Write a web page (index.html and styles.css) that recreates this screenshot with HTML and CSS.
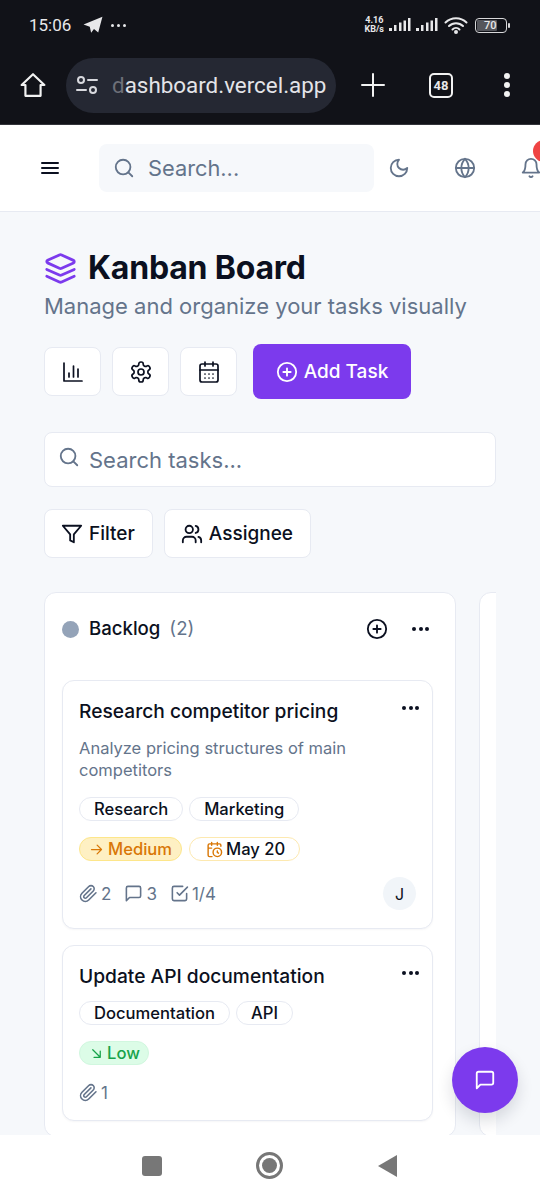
FILE: index.html
```html
<!DOCTYPE html>
<html>
<head>
  <meta name="viewport" content="width=device-width, initial-scale=1">
  <title>Kanban Board</title>
  <link rel="stylesheet" href="styles.css">
</head>
<body>
<div class="phone">

  <!-- android status bar + browser toolbar -->
  <div class="chrome">
    <div class="status">
      <span class="clock">15:06</span>
      <svg class="plane" viewBox="0 0 18 16"><path d="M17.500 .5 .5 7.600l5.600 2 1.200 5.400 2.600-3.400 3.800 3.200z" fill="#e8e8ea"/></svg>
      <span class="status-dots"><i></i><i></i><i></i></span>
      <span class="status-space"></span>
      <span class="speed">4.16<br>KB/s</span>
      <svg class="bars" viewBox="0 0 22 14"><g fill="#e8e8ea"><rect x="0" y="10" width="3" height="3"/><rect x="5" y="7" width="2.500" height="6"/><rect x="10" y="4.500" width="2.500" height="8.500"/><rect x="14.500" y="2.500" width="2.500" height="10.500"/><rect x="19" y="0" width="2.500" height="13"/></g></svg>
      <svg class="bars" viewBox="0 0 22 14"><g fill="#e8e8ea"><rect x="0" y="10" width="3" height="3"/><rect x="5" y="7" width="2.500" height="6"/><rect x="10" y="4.500" width="2.500" height="8.500"/><rect x="14.500" y="2.500" width="2.500" height="10.500"/><rect x="19" y="0" width="2.500" height="13"/></g></svg>
      <svg class="wifi" viewBox="0 0 24 18" fill="none" stroke="#e8e8ea" stroke-width="2" stroke-linecap="round"><path d="M1.500 6.500a15 15 0 0 1 21 0M5 10a10 10 0 0 1 14 0M8.500 13.500a5 5 0 0 1 7 0"/><circle cx="12" cy="16" r="1" fill="#e8e8ea"/></svg>
      <span class="battery"><span class="battery-level">70</span></span>
      <span class="battery-tip"></span>
    </div>
    <div class="toolbar">
      <svg class="home" viewBox="0 0 24 24" fill="none" stroke="#f2f2f2" stroke-width="2" stroke-linejoin="round"><path d="M12 2 1.500 12H5v10h14V12h3.500z"/></svg>
      <div class="url">
        <svg class="tune" viewBox="0 0 22 20" fill="none" stroke="#d8d9de" stroke-width="2"><circle cx="5" cy="5" r="3"/><path d="M12 5h9M1 15h9"/><circle cx="17" cy="15" r="3"/></svg>
        <span class="url-text"><span class="url-fade">d</span>ashboard.vercel.app</span>
      </div>
      <svg class="plus" viewBox="0 0 24 24" fill="none" stroke="#f2f2f2" stroke-width="2.200"><path d="M12 1v22M1 12h22"/></svg>
      <span class="tabs">48</span>
      <span class="kebab"><i></i><i></i><i></i></span>
    </div>
  </div>

  <!-- app header -->
  <header class="topbar">
    <svg class="menu" viewBox="0 0 18 14" fill="none" stroke="#111827" stroke-width="2"><path d="M1 2h16M1 7h16M1 12h16"/></svg>
    <div class="top-search">
      <svg class="ico20" viewBox="0 0 24 24"><circle cx="11" cy="11" r="8"/><path d="m21 21-4.300-4.300"/></svg>
      <span>Search...</span>
    </div>
    <svg class="ico-top" viewBox="0 0 24 24"><path d="M12 3a6 6 0 0 0 9 9 9 9 0 1 1-9-9Z"/></svg>
    <svg class="ico-top" viewBox="0 0 24 24"><circle cx="12" cy="12" r="10"/><path d="M12 2a14.500 14.500 0 0 0 0 20 14.500 14.500 0 0 0 0-20M2 12h20"/></svg>
    <div class="bell">
      <svg class="ico-top" viewBox="0 0 24 24"><path d="M6 8a6 6 0 0 1 12 0c0 7 3 9 3 9H3s3-2 3-9"/><path d="M10.300 21a1.940 1.940 0 0 0 3.400 0"/></svg>
      <span class="bell-dot"></span>
    </div>
  </header>

  <main class="page">
    <div class="title-row">
      <svg class="layers" viewBox="0 0 24 24"><path d="m12.830 2.180a2 2 0 0 0-1.660 0L2.600 6.080a1 1 0 0 0 0 1.830l8.580 3.910a2 2 0 0 0 1.660 0l8.580-3.900a1 1 0 0 0 0-1.830Z"/><path d="m22 17.650-9.170 4.160a2 2 0 0 1-1.660 0L2 17.650"/><path d="m22 12.650-9.170 4.160a2 2 0 0 1-1.660 0L2 12.650"/></svg>
      <h1>Kanban Board</h1>
    </div>
    <p class="subtitle">Manage and organize your tasks visually</p>

    <div class="actions">
      <button class="icon-btn"><svg viewBox="0 0 24 24"><path d="M3 3v18h18"/><path d="M8 17v-4M12.500 17V6M17 17V9"/></svg></button>
      <button class="icon-btn"><svg viewBox="0 0 24 24"><path d="M12.220 2h-.44a2 2 0 0 0-2 2v.18a2 2 0 0 1-1 1.730l-.43.250a2 2 0 0 1-2 0l-.15-.08a2 2 0 0 0-2.730.730l-.22.380a2 2 0 0 0 .730 2.730l.15.100a2 2 0 0 1 1 1.720v.510a2 2 0 0 1-1 1.740l-.15.090a2 2 0 0 0-.730 2.730l.22.380a2 2 0 0 0 2.730.730l.15-.08a2 2 0 0 1 2 0l.43.250a2 2 0 0 1 1 1.730V20a2 2 0 0 0 2 2h.44a2 2 0 0 0 2-2v-.18a2 2 0 0 1 1-1.730l.43-.250a2 2 0 0 1 2 0l.15.080a2 2 0 0 0 2.730-.730l.22-.390a2 2 0 0 0-.730-2.730l-.15-.080a2 2 0 0 1-1-1.740v-.500a2 2 0 0 1 1-1.740l.15-.090a2 2 0 0 0 .730-2.730l-.22-.380a2 2 0 0 0-2.730-.730l-.15.080a2 2 0 0 1-2 0l-.43-.250a2 2 0 0 1-1-1.730V4a2 2 0 0 0-2-2z"/><circle cx="12" cy="12" r="3"/></svg></button>
      <button class="icon-btn"><svg viewBox="0 0 24 24"><rect x="3" y="4" width="18" height="18" rx="2"/><path d="M8 2v4M16 2v4M3 10h18M8 14h.01M12 14h.01M16 14h.01M8 18h.01M12 18h.01M16 18h.01"/></svg></button>
      <button class="add-btn"><svg class="ico22" viewBox="0 0 24 24"><circle cx="12" cy="12" r="10"/><path d="M8 12h8M12 8v8"/></svg>Add Task</button>
    </div>

    <div class="task-search">
      <svg class="ico20" viewBox="0 0 24 24"><circle cx="11" cy="11" r="8"/><path d="m21 21-4.300-4.300"/></svg>
      <span>Search tasks...</span>
    </div>

    <div class="filters">
      <button class="filter-btn"><svg class="ico20 dark" viewBox="0 0 24 24"><path d="M22 3H2l8 9.460V19l4 2v-8.540z"/></svg>Filter</button>
      <button class="filter-btn"><svg class="ico20 dark" viewBox="0 0 24 24"><path d="M16 21v-2a4 4 0 0 0-4-4H6a4 4 0 0 0-4 4v2"/><circle cx="9" cy="7" r="4"/><path d="M22 21v-2a4 4 0 0 0-3-3.870M16 3.130a4 4 0 0 1 0 7.750"/></svg>Assignee</button>
    </div>

    <div class="board">
      <section class="column">
        <div class="col-head">
          <span class="col-dot"></span>
          <span class="col-name">Backlog</span>
          <span class="col-count">(2)</span>
          <svg class="ico22 dark col-add" viewBox="0 0 24 24"><circle cx="12" cy="12" r="10"/><path d="M8 12h8M12 8v8"/></svg>
          <span class="more col-more"><i></i><i></i><i></i></span>
        </div>

        <article class="card">
          <div class="card-head">
            <h3>Research competitor pricing</h3>
            <span class="more"><i></i><i></i><i></i></span>
          </div>
          <p class="desc">Analyze pricing structures of main competitors</p>
          <div class="tags">
            <span class="tag">Research</span>
            <span class="tag">Marketing</span>
          </div>
          <div class="tags">
            <span class="pill medium"><svg class="ico14" viewBox="0 0 24 24"><path d="M4 12h16M13 5l7 7-7 7"/></svg>Medium</span>
            <span class="pill due"><svg class="ico16" viewBox="0 0 24 24"><path d="M21 7.500V6a2 2 0 0 0-2-2H5a2 2 0 0 0-2 2v14a2 2 0 0 0 2 2h3.500M16 2v4M8 2v4M3 10h5"/><circle cx="16" cy="16" r="6"/><path d="M16 14v2.200l1.600 1"/></svg>May 20</span>
          </div>
          <div class="meta">
            <span class="meta-item"><svg class="ico18" viewBox="0 0 24 24"><path d="m21.440 11.050-9.190 9.190a6 6 0 0 1-8.490-8.490l8.570-8.570A4 4 0 1 1 18 8.840l-8.590 8.570a2 2 0 0 1-2.830-2.830l8.490-8.480"/></svg>2</span>
            <span class="meta-item"><svg class="ico18" viewBox="0 0 24 24"><path d="M21 15a2 2 0 0 1-2 2H7l-4 4V5a2 2 0 0 1 2-2h14a2 2 0 0 1 2 2z"/></svg>3</span>
            <span class="meta-item"><svg class="ico18" viewBox="0 0 24 24"><path d="m9 11 3 3L22 4"/><path d="M21 12v7a2 2 0 0 1-2 2H5a2 2 0 0 1-2-2V5a2 2 0 0 1 2-2h11"/></svg>1/4</span>
            <span class="avatar">J</span>
          </div>
        </article>

        <article class="card">
          <div class="card-head">
            <h3>Update API documentation</h3>
            <span class="more"><i></i><i></i><i></i></span>
          </div>
          <div class="tags">
            <span class="tag">Documentation</span>
            <span class="tag">API</span>
          </div>
          <div class="tags">
            <span class="pill low"><svg class="ico14" viewBox="0 0 24 24"><path d="M6 6l12 12M18 8v10H8"/></svg>Low</span>
          </div>
          <div class="meta meta-last">
            <span class="meta-item"><svg class="ico18" viewBox="0 0 24 24"><path d="m21.440 11.050-9.190 9.190a6 6 0 0 1-8.490-8.490l8.570-8.570A4 4 0 1 1 18 8.840l-8.590 8.570a2 2 0 0 1-2.830-2.830l8.490-8.480"/></svg>1</span>
          </div>
        </article>
      </section>
      <section class="column"></section>
    </div>

    <button class="fab"><svg class="ico22" viewBox="0 0 24 24"><path d="M21 15a2 2 0 0 1-2 2H7l-4 4V5a2 2 0 0 1 2-2h14a2 2 0 0 1 2 2z"/></svg></button>
  </main>

  <!-- android nav keys -->
  <nav class="keys">
    <span class="key-square"></span>
    <span class="key-ring"><span></span></span>
    <span class="key-back"></span>
  </nav>
</div>
</body>
</html>
```

FILE: styles.css
```css
* {box-sizing: border-box;}
html, body {margin: 0; padding: 0;}
body {font-family: Inter, "Noto Sans", sans-serif; color: #0b1020; background: #fff;}
button {font: inherit; color: inherit; cursor: pointer;}
h1, h3, p {margin: 0;}
svg {flex: none; display: block; fill: none; stroke: currentColor; stroke-width: 2; stroke-linecap: round; stroke-linejoin: round;}

.phone {width: 540px; height: 1200px; display: flex; flex-direction: column; overflow: hidden;}

/* status bar and browser bar */
.chrome {background: #111218; color: #e8e8ea; height: 125px; flex: none; border-bottom: 1px solid #33343a; font-family: Roboto, sans-serif;}
.status {height: 42px; padding: 8px 30px 0 29px; display: flex; align-items: center;}
.clock {font-size: 17px; width: 54px;}
.plane {width: 20px; height: 18px; stroke: none;}
.status-dots {display: flex; gap: 3px; margin-left: 8px;}
.status-dots i {width: 3px; height: 3px; border-radius: 50%; background: #e8e8ea;}
.status-space {flex: 1;}
.speed {font-size: 9px; line-height: 9px; font-weight: 700; text-align: center; margin-right: 5px;}
.bars {width: 22px; height: 14px; stroke: none; margin-right: 5px;}
.wifi {width: 24px; height: 18px; margin-left: 1px;}
.battery {width: 32px; height: 15px; margin-left: 7px; border: 1.500px solid #d8d8da; border-radius: 4px; padding: 1px; display: flex;}
.battery-level {background: #55565c; width: 70%; border-radius: 1px; font-size: 11px; line-height: 11px; font-weight: 500; text-align: right; white-space: nowrap; color: #e8e8ea;}
.battery-tip {width: 2px; height: 5px; margin-left: 1px; background: #d8d8da; border-radius: 1px;}
.toolbar {height: 82px; padding: 4px 0 0 20px; display: flex; align-items: center;}
.home {width: 26px; height: 26px; stroke: #f2f2f2;}
.url {width: 270px; height: 55px; margin-left: 20px; border-radius: 28px; background: #252833; display: flex; align-items: center; padding-left: 10px; overflow: hidden;}
.tune {width: 22px; height: 20px; stroke: #d8d9de;}
.url-text {font-size: 22.400px; margin-left: 14px; color: #e3e4e8; white-space: nowrap;}
.url-fade {color: #6d6f78;}
.plus {width: 24px; height: 24px; margin-left: 25px; stroke: #f2f2f2;}
.tabs {width: 24px; height: 25px; margin-left: 44px; border: 2px solid #f2f2f2; border-radius: 5px; font-size: 13px; font-weight: 700; line-height: 21px; text-align: center;}
.kebab {display: flex; flex-direction: column; gap: 3px; margin-left: 51px;}
.kebab i {width: 6px; height: 6px; border-radius: 50%; background: #f2f2f2;}

/* app header */
.topbar {height: 87px; flex: none; background: #fff; border-bottom: 1px solid #e7eaf2; display: flex; align-items: center; padding-left: 41px;}
.menu {width: 18px; height: 14px;}
.top-search {flex: none; width: 275px; height: 48px; margin-left: 40px; margin-right: 14px; background: #f6f8fb; border-radius: 8px; display: flex; align-items: center; gap: 13px; padding-left: 14px; color: #64748b; font-size: 21.800px;}
.ico-top {width: 22px; height: 22px; margin-right: 44px; color: #64748b;}
.bell {position: relative; flex: none; width: 22px; height: 22px;}
.bell .ico-top {margin-right: 0;}
.bell-dot {position: absolute; left: 13px; top: -17px; width: 22px; height: 22px; border-radius: 50%; background: #ef4444;}

/* page */
.page {flex: 1; min-height: 0; position: relative; background: #f6f8fb; padding: 36px 0 0 44px; overflow: hidden;}
.title-row {display: flex; align-items: center; gap: 11px; height: 40px;}
.layers {width: 33px; height: 33px; color: #7c3aed;}
h1 {font-size: 32px; line-height: 40px; font-weight: 700; letter-spacing: -0.2px; white-space: nowrap;}
.subtitle {font-size: 22px; line-height: 30px; color: #64748b; margin-top: 3px; white-space: nowrap;}
.actions {display: flex; align-items: center; gap: 11px; margin-top: 23px;}
.icon-btn {width: 57px; height: 49px; background: #fff; border: 1px solid #e7eaf2; border-radius: 8px; display: flex; align-items: center; justify-content: center; padding: 0; color: #0b1020;}
.icon-btn svg {width: 24px; height: 24px; stroke-width: 1.700;}
.add-btn {margin-left: 5px; width: 158px; height: 55px; background: #7c3aed; color: #fff; border: 0; border-radius: 8px; font-size: 19px; font-weight: 500; display: flex; align-items: center; justify-content: center; gap: 6px; padding: 0;}
.task-search {width: 452px; height: 55px; margin-top: 33px; background: #fff; border: 1px solid #e7eaf2; border-radius: 8px; display: flex; align-items: center; gap: 9px; padding: 0 13px; color: #64748b; font-size: 22px;}
.task-search svg {margin-top: -6px;}
.filters {display: flex; gap: 11px; margin-top: 22px;}
.filter-btn {height: 49px; padding: 0 17px 0 16px; background: #fff; border: 1px solid #e7eaf2; border-radius: 8px; font-size: 19px; font-weight: 500; display: flex; align-items: center; gap: 6px;}
.ico14 {width: 15px; height: 15px;}
.ico16 {width: 17px; height: 17px;}
.ico18 {width: 19px; height: 19px;}
.ico20 {width: 22px; height: 22px;}
.ico22 {width: 22px; height: 22px;}
.dark {color: #0b1020;}

/* board */
.board {width: 452px; margin-top: 34px; display: flex; gap: 23px; overflow: hidden;}
.column {width: 412px; flex: none; background: #fff; border: 1px solid #e7eaf2; border-radius: 12px; padding: 0 22px 15px 17px;}
.col-head {height: 72px; display: flex; align-items: center; margin-bottom: 15px;}
.col-dot {width: 17px; height: 17px; border-radius: 50%; background: #94a3b8;}
.col-name {font-size: 18.600px; font-weight: 500; margin-left: 10px; padding-bottom: 2px;}
.col-count {font-size: 18.600px; color: #64748b; margin-left: 9px; padding-bottom: 2px;}
.col-add {margin-left: auto;}
.col-more {margin-left: 24px; margin-right: 4px;}
.more {display: flex; gap: 2.500px;}
.more i {width: 4px; height: 4px; border-radius: 50%; background: #0b1020;}
.card {background: #fff; border: 1px solid #e7eaf2; border-radius: 12px; padding: 16px 16px 0; box-shadow: 0 1px 2px rgba(15, 23, 42, .04); margin-bottom: 16px;}
.card:last-child {margin-bottom: 0;}
.card-head {display: flex; justify-content: space-between; align-items: flex-start;}
.card-head h3 {font-size: 19.200px; line-height: 28px; font-weight: 500;}
.card-head .more {margin-top: 9px; margin-right: -3px;}
.desc {font-size: 16.500px; line-height: 22px; color: #64748b; margin-top: 12px; width: 290px;}
.tags {display: flex; gap: 6px; margin-top: 11px;}
.desc + .tags {margin-top: 16px;}
.tag, .pill {height: 24px; border-radius: 12px; font-size: 16.600px; font-weight: 500; display: flex; align-items: center; white-space: nowrap;}
.tag {padding: 0 14px; border: 1px solid #e7eaf2; background: #fff;}
.tags + .tags {margin-top: 16px;}
.pill {padding: 0 9px; gap: 4px; border: 1px solid transparent;}
.medium {background: #fef0c3; border-color: #fde68a; color: #d97706;}
.due {background: #fff; border-color: #fde9b0; color: #0b1020; margin-left: 1px; padding: 0 14px 0 16px; gap: 3px;}
.due svg {color: #d97706;}
.low {background: #dcfce7; border-color: #d1f7df; color: #16a34a; padding-right: 8px; gap: 3px;}
.meta {display: flex; align-items: center; gap: 13px; height: 33px; margin-top: 16px; margin-bottom: 18px; color: #64748b; font-size: 17px;}
.meta-last {margin-top: 11px; margin-bottom: 11px;}
.meta-item {display: flex; align-items: center; gap: 3px;}
.avatar {width: 33px; height: 33px; margin-left: auto; border-radius: 50%; background: #f1f5f9; color: #0b1020; font-size: 16px; display: flex; align-items: center; justify-content: center;}

.fab {position: absolute; right: 22px; top: 835px; width: 66px; height: 66px; border: 0; border-radius: 50%; background: #7c3aed; color: #fff; display: flex; align-items: center; justify-content: center; padding: 0; box-shadow: 0 8px 16px rgba(15, 23, 42, .14);}

/* nav keys */
.keys {height: 65px; flex: none; background: #fff; position: relative; z-index: 1; display: flex; align-items: center; padding: 0 0 4px 142px;}
.key-square {width: 20px; height: 20px; border-radius: 3px; background: #777;}
.key-ring {width: 27px; height: 27px; margin-left: 94px; border: 3px solid #777; border-radius: 50%; display: flex; align-items: center; justify-content: center;}
.key-ring span {width: 15px; height: 15px; border-radius: 50%; background: #777;}
.key-back {width: 0; height: 0; margin-left: 95px; border-style: solid; border-width: 11px 19px 11px 0; border-color: transparent #777 transparent transparent;}
```
